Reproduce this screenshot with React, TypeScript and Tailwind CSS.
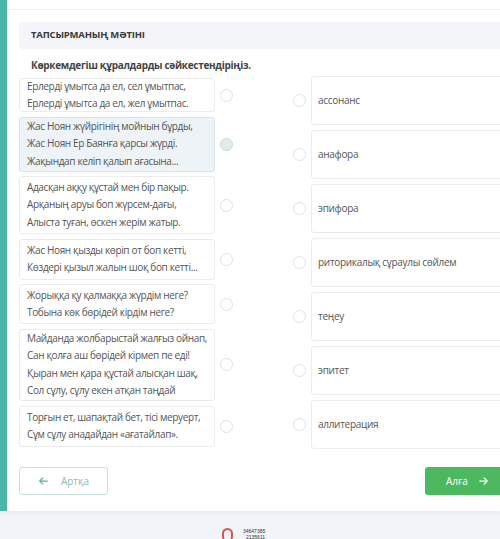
import React from 'react';

const leftItems = [
  { lines: ['Ерлерді ұмытса да ел, сел ұмытпас,', 'Ерлерді ұмытса да ел, жел ұмытпас.'], h: 'h-[34px]' },
  {
    lines: ['Жас Ноян жүйрігінің мойнын бұрды,', 'Жас Ноян Ер Баянға қарсы жүрді.', 'Жақындап келіп қалып ағасына...'],
    h: 'h-[55px]',
    active: true,
  },
  { lines: ['Адасқан аққу құстай мен бір пақыр.', 'Арқаның аруы боп жүрсем-дағы,', 'Алыста туған, өскен жерім жатыр.'], h: 'h-[58px]' },
  { lines: ['Жас Ноян қызды көріп от боп кетті,', 'Көздері қызыл жалын шоқ боп кетті...'], h: 'h-[41px]' },
  { lines: ['Жорыққа қу қалмаққа жүрдім неге?', 'Тобына көк бөрідей кірдім неге?'], h: 'h-[40px]' },
  {
    lines: ['Майданда жолбарыстай жалғыз ойнап,', 'Сан қолға аш бөрідей кірмеп пе еді!', 'Қыран мен қара құстай алысқан шақ,', 'Сол сұлу, сұлу екен атқан таңдай'],
    h: 'h-[72px]',
  },
  { lines: ['Торғын ет, шапақтай бет, тісі меруерт,', 'Сұм сұлу анадайдан «ағатайлап».'], h: 'h-[41px]' },
];

const rightItems = ['ассонанс', 'анафора', 'эпифора', 'риторикалық сұраулы сөйлем', 'теңеу', 'эпитет', 'аллитерация'];

const Radio: React.FC<{ active?: boolean }> = ({ active }) => (
  <span
    className={`block w-[13px] h-[13px] shrink-0 rounded-full border-[1.5px] ${
      active ? 'border-[#c9d8d6] bg-[#e3ecea]' : 'border-[#e2e2e2] bg-white'
    }`}
  />
);

const App: React.FC = () => {
  return (
    <div className="w-[500px] h-[539px] overflow-hidden bg-[#f1f4f8] font-['Open_Sans',sans-serif]">
      <div className="flex h-[511px] shadow-[0_2px_4px_rgba(0,0,0,0.05)]">
        <div className="w-[7px] bg-[#4cb5aa] shrink-0" />
        <div className="flex-1 bg-white overflow-hidden">
          <div className="h-[10px] border-b border-[#f0f0f0]" />
          <div className="pl-[12px] pt-[12px]">
            <div className="h-[27px] bg-[#f3f5f8] rounded-l-[4px] flex items-center pl-[12px] text-[9.5px] font-bold text-[#3a3a3a] tracking-[-0.2px]">
              ТАПСЫРМАНЫҢ МӘТІНІ
            </div>
            <div className="mt-[9px] pl-[12px] text-[10px] font-bold text-[#444] leading-[14px] tracking-[-0.3px]">
              Көркемдегіш құралдарды сәйкестендіріңіз.
            </div>

            <div className="flex mt-[5px]">
              <div className="flex flex-col gap-[4.6px] mt-[1px]">
                {leftItems.map((it, i) => (
                  <div key={i} className="flex items-center">
                    <div
                      className={`w-[196px] ${it.h} rounded-[3px] border flex flex-col justify-center px-[7px] text-[10px] leading-[17.5px] tracking-[-0.35px] text-[#555] whitespace-nowrap overflow-hidden ${
                        it.active ? 'bg-[#edf3f6] border-[#d8e4e9]' : 'bg-white border-[#ececec]'
                      }`}
                    >
                      {it.lines.map((l, j) => (
                        <div key={j}>{l}</div>
                      ))}
                    </div>
                    <div className="ml-[5px]">
                      <Radio active={it.active} />
                    </div>
                  </div>
                ))}
              </div>

              <div className="flex flex-col gap-[5px] ml-[60px] flex-1 -mt-[1px]">
                {rightItems.map((t, i) => (
                  <div key={i} className="flex items-center">
                    <Radio />
                    <div className="ml-[5px] flex-1 h-[49px] -mr-[4px] rounded-[3px] border border-[#ececec] bg-white flex items-center px-[6px] text-[10px] tracking-[-0.3px] text-[#555]">
                      {t}
                    </div>
                  </div>
                ))}
              </div>
            </div>

            <div className="flex justify-between items-center mt-[18px]">
              <button className="w-[89px] h-[28px] rounded-[3px] border border-[#c9dfdc] bg-white flex items-center justify-center gap-[12px] text-[10px] text-[#8dbab4]">
                <svg width="11" height="10" viewBox="0 0 448 512" fill="#5fb0a6">
                  <path d="M9.4 233.4c-12.5 12.5-12.5 32.8 0 45.3l160 160c12.5 12.5 32.8 12.5 45.3 0s12.5-32.8 0-45.3L109.2 288H416c17.7 0 32-14.3 32-32s-14.3-32-32-32H109.3L214.6 118.6c12.5-12.5 12.5-32.8 0-45.3s-32.8-12.5-45.3 0l-160 160z" />
                </svg>
                Артқа
              </button>
              <button className="w-[80px] h-[28px] -mr-[5px] rounded-l-[3px] bg-[#4cb85f] flex items-center gap-[10px] pl-[21px] text-[10px] text-white">
                Алға
                <svg width="11" height="10" viewBox="0 0 448 512" fill="white">
                  <path d="M438.6 278.6c12.5-12.5 12.5-32.8 0-45.3l-160-160c-12.5-12.5-32.8-12.5-45.3 0s-12.5 32.8 0 45.3L338.8 224H32c-17.7 0-32 14.3-32 32s14.3 32 32 32h306.7L233.4 393.4c-12.5 12.5-12.5 32.8 0 45.3s32.8 12.5 45.3 0l160-160z" />
                </svg>
              </button>
            </div>
          </div>
        </div>
      </div>

      <div className="flex items-start pt-[17px] pl-[222px] gap-[10px]">
        <span className="block w-[11px] h-[14px] rounded-full border-[2px] border-[#d9534f]" />
        <div className="text-[5px] leading-[6px] text-[#333] font-['Liberation_Sans',sans-serif]">
          <div>34647385</div>
          <div className="pl-[3px]">2135611</div>
        </div>
      </div>
    </div>
  );
};

export default App;
